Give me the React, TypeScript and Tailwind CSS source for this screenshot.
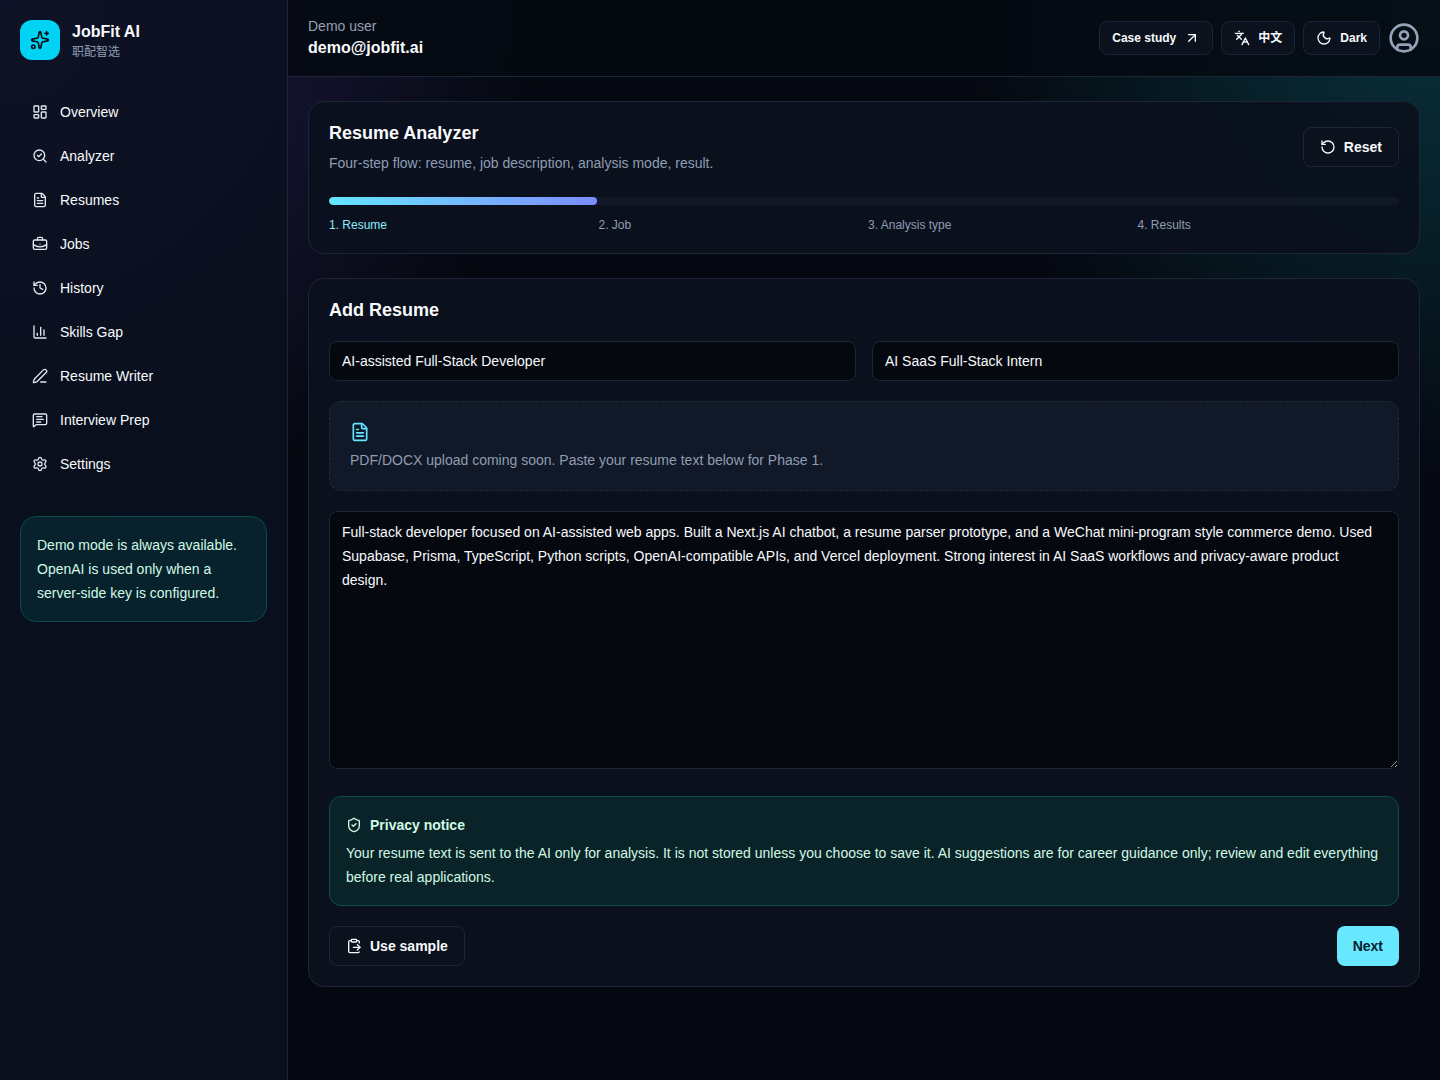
import {
  ArrowUpRight,
  BriefcaseBusiness,
  ChartColumn,
  CircleUser,
  ClipboardPaste,
  FileText,
  History,
  Languages,
  LayoutDashboard,
  MessageSquareText,
  Moon,
  PenLine,
  RotateCcw,
  SearchCheck,
  Settings,
  ShieldCheck,
  Sparkles,
} from "lucide-react"

const navItems = [
  { label: "Overview", icon: LayoutDashboard },
  { label: "Analyzer", icon: SearchCheck },
  { label: "Resumes", icon: FileText },
  { label: "Jobs", icon: BriefcaseBusiness },
  { label: "History", icon: History },
  { label: "Skills Gap", icon: ChartColumn },
  { label: "Resume Writer", icon: PenLine },
  { label: "Interview Prep", icon: MessageSquareText },
  { label: "Settings", icon: Settings },
]

const steps = ["Resume", "Job", "Analysis type", "Results"]

const sampleResume =
  "Full-stack developer focused on AI-assisted web apps. Built a Next.js AI chatbot, a resume parser prototype, and a WeChat mini-program style commerce demo. Used Supabase, Prisma, TypeScript, Python scripts, OpenAI-compatible APIs, and Vercel deployment. Strong interest in AI SaaS workflows and privacy-aware product design."

const headerButton =
  "flex items-center gap-2 rounded-lg border border-[#1a2434] bg-[#0b111d] px-3 py-2 text-xs font-semibold"
const outlineButton =
  "flex h-10 items-center gap-2 rounded-lg border border-[#1d2637] bg-[#0b111d] px-4 text-sm font-semibold"
const field =
  "w-full rounded-lg border border-[#1d2637] bg-[#05080f] px-3 text-sm text-slate-50 outline-none"

const Sidebar = () => {
  return (
    <aside className="w-72 shrink-0 border-r border-[#1d2637] bg-[#0b101f]/85 p-5">
      <a className="flex items-center gap-3" href="#">
        <span className="flex size-10 items-center justify-center rounded-xl bg-cyan-400 text-[#04101c]">
          <Sparkles className="size-5" />
        </span>
        <span>
          <span className="block leading-6 font-semibold">JobFit AI</span>
          <span className="block text-xs text-[#8f9db3]">职配智选</span>
        </span>
      </a>
      <nav className="mt-8 flex flex-col gap-1">
        {navItems.map(({ label, icon: Icon }) => (
          <a
            key={label}
            className="flex h-10 items-center gap-3 rounded-lg px-3 text-sm"
            href="#"
          >
            <Icon className="size-4 text-slate-200" />
            {label}
          </a>
        ))}
      </nav>
      <p className="mt-8 rounded-2xl border border-[#0a4a48] bg-[#08222d] p-4 text-sm leading-6 text-emerald-100">
        Demo mode is always available. OpenAI is used only when a server-side
        key is configured.
      </p>
    </aside>
  )
}

const Header = () => {
  return (
    <header className="flex items-center justify-between border-b border-[#1d2637] bg-[#050911]/85 px-5 py-4">
      <div>
        <p className="text-sm text-[#94a0b3]">Demo user</p>
        <p className="font-semibold">demo@jobfit.ai</p>
      </div>
      <div className="flex items-center gap-2">
        <a className={headerButton} href="#">
          Case study
          <ArrowUpRight className="size-4" />
        </a>
        <button className={headerButton} type="button">
          <Languages className="size-4" />
          中文
        </button>
        <button className={headerButton} type="button">
          <Moon className="size-4" />
          Dark
        </button>
        <button type="button" aria-label="Account">
          <CircleUser className="size-8 text-[#94a3b8]" />
        </button>
      </div>
    </header>
  )
}

const StepCard = () => {
  return (
    <section className="rounded-2xl border border-[#1d2637] bg-[#0b111e]/95 p-5">
      <div className="flex items-center justify-between">
        <div>
          <h1 className="text-lg leading-tight font-semibold">
            Resume Analyzer
          </h1>
          <p className="mt-2 text-sm text-[#8f9db3]">
            Four-step flow: resume, job description, analysis mode, result.
          </p>
        </div>
        <button className={outlineButton} type="button">
          <RotateCcw className="size-4" />
          Reset
        </button>
      </div>
      <div className="mt-6 h-2 overflow-hidden rounded-full bg-[#111827]">
        <div className="h-full w-1/4 rounded-full bg-linear-to-r from-[#62e6ff] to-[#7c8cff]" />
      </div>
      <ol className="mt-3 grid grid-cols-4 gap-2 text-xs text-[#8f9db3]">
        {steps.map((step, i) => (
          <li key={step} className={i === 0 ? "text-[#8becff]" : ""}>
            {i + 1}. {step}
          </li>
        ))}
      </ol>
    </section>
  )
}

const ResumeForm = () => {
  return (
    <section className="flex flex-col gap-5 rounded-2xl border border-[#1d2637] bg-[#0b111e]/95 p-5">
      <h2 className="text-lg leading-tight font-semibold">Add Resume</h2>
      <div className="grid grid-cols-2 gap-4">
        <input
          className={`${field} h-10`}
          aria-label="Resume title"
          defaultValue="AI-assisted Full-Stack Developer"
        />
        <input
          className={`${field} h-10`}
          aria-label="Target role"
          defaultValue="AI SaaS Full-Stack Intern"
        />
      </div>
      <div className="rounded-xl border border-dashed border-[#1f2a3b] bg-[#111827] p-5">
        <FileText className="size-5 text-[#62e6ff]" />
        <p className="mt-2 text-sm text-[#8f9db3]">
          PDF/DOCX upload coming soon. Paste your resume text below for Phase 1.
        </p>
      </div>
      <div>
        <textarea
          className={`${field} py-2 leading-6`}
          rows={10}
          aria-label="Resume text"
          defaultValue={sampleResume}
        />
      </div>
      <div className="rounded-xl border border-[#0a4f48] bg-[#0a2328] p-4 text-sm leading-6 text-emerald-100">
        <p className="flex items-center gap-2 font-semibold">
          <ShieldCheck className="size-4" />
          Privacy notice
        </p>
        <p className="mt-1">
          Your resume text is sent to the AI only for analysis. It is not stored
          unless you choose to save it. AI suggestions are for career guidance
          only; review and edit everything before real applications.
        </p>
      </div>
      <div className="flex items-center justify-between">
        <button className={outlineButton} type="button">
          <ClipboardPaste className="size-4" />
          Use sample
        </button>
        <button
          className="h-10 rounded-lg bg-[#67e8ff] px-4 text-sm font-semibold text-[#06202e]"
          type="button"
        >
          Next
        </button>
      </div>
    </section>
  )
}

export default function App() {
  return (
    <div className="flex min-h-screen bg-[#050810] bg-[radial-gradient(circle_at_top_left,rgba(124,92,255,0.27),transparent_34rem),radial-gradient(circle_at_top_right,rgba(20,184,200,0.24),transparent_30rem)] font-['Liberation_Sans','Noto_Sans_CJK_SC',sans-serif] text-slate-50">
      <Sidebar />
      <div className="min-w-0 flex-1">
        <Header />
        <main className="flex flex-col gap-6 px-5 py-6">
          <StepCard />
          <ResumeForm />
        </main>
      </div>
    </div>
  )
}
